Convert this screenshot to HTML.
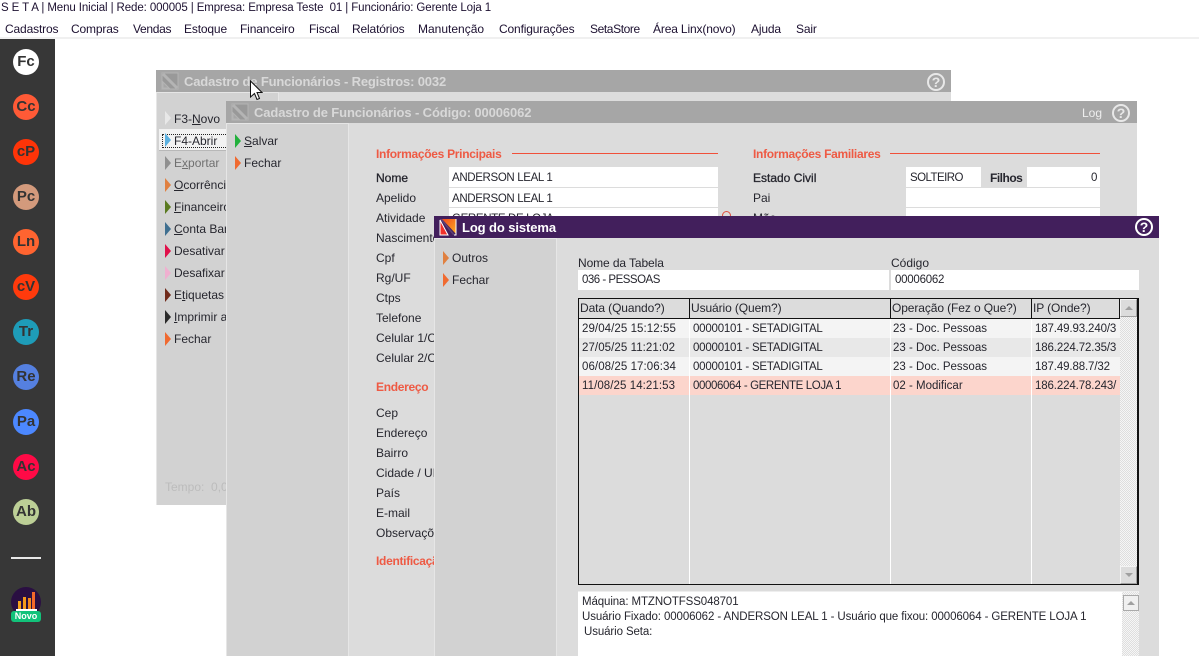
<!DOCTYPE html>
<html><head><meta charset="utf-8"><title>SETA</title>
<style>
html,body{margin:0;padding:0;width:1199px;height:656px;overflow:hidden;background:#fff}
body{position:relative;font-family:"Liberation Sans",sans-serif;font-size:12px;color:#26262e}
.a{position:absolute}
.t{position:absolute;white-space:nowrap;line-height:14px;font-size:12px}
.m{color:#1c1030;letter-spacing:-.15px;top:22px}
.win{position:absolute;overflow:hidden;background:#dcdcdc}
.bar{position:absolute;left:0;top:0;right:0;height:22px;background:#a6a6a6}
.ttl{position:absolute;white-space:nowrap;font-weight:bold;font-size:13px;line-height:23px;color:#d8d8d8;letter-spacing:-.14px}
.side{position:absolute;background:#d2d2d2;border-left:1px solid #e6e6e6;border-right:1px solid #e6e6e6;border-top:1px solid #e6e6e6}
.tri{position:absolute;width:0;height:0;border-style:solid;border-width:7px 0 7px 6px;border-color:transparent}
.c{position:absolute;left:13px;width:26px;height:26px;border-radius:50%;text-align:center;line-height:26px;font-weight:bold;font-size:15px;color:#333}
.f{position:absolute;background:#fff;height:19px;line-height:21px;padding-left:3px;white-space:nowrap;overflow:hidden;box-sizing:border-box;font-size:11.5px;letter-spacing:-.35px}
.h{position:absolute;white-space:nowrap;font-weight:bold;color:#ee5a44;line-height:14px;font-size:12px;letter-spacing:-.3px}
.ln{position:absolute;height:1px;background:#f0503a}
.help{position:absolute;width:14px;height:14px;border:2px solid #e8e8e8;border-radius:50%;color:#e8e8e8;font-weight:bold;font-size:14px;line-height:15px;text-align:center}
.sb7{-webkit-text-stroke:.3px currentColor;letter-spacing:0}
.hd{position:absolute;top:0;height:19px;line-height:19px;white-space:nowrap;overflow:hidden;border-right:1px solid #111;box-sizing:border-box;padding-left:1px;font-size:12px;letter-spacing:-.1px}
.row{position:absolute;left:0;width:541px;height:19px;line-height:21px}
.row span{position:absolute;white-space:nowrap;top:0;font-size:11.5px;letter-spacing:-.22px}
.row span.d{letter-spacing:.07px}.row span.o{letter-spacing:0}.row span.i{letter-spacing:-.13px}
.v{position:absolute;width:1px;background:#fff;top:20px;bottom:0}
.sb{position:absolute;background-color:#f6f6f6;background-image:conic-gradient(#dedede 25%,transparent 0 50%,#dedede 0 75%,transparent 0);background-size:2px 2px}
.btn{position:absolute;width:15px;height:16px;background:#dcdcdc;border:1px solid #aaa;border-color:#f4f4f4 #a0a0a0 #a0a0a0 #f4f4f4}
.up{position:absolute;left:4px;top:6px;width:0;height:0;border-left:4px solid transparent;border-right:4px solid transparent;border-bottom:4px solid #a0a0a0}
.dn{position:absolute;left:4px;top:6px;width:0;height:0;border-left:4px solid transparent;border-right:4px solid transparent;border-top:4px solid #a0a0a0}
.mm{font-size:11.5px;letter-spacing:-.11px}
</style></head>
<body>
<span class="t" style="left:1px;top:1px;color:#1c1030;font-size:11.5px;letter-spacing:-.1px">S E T A | Menu Inicial | Rede: 000005 | Empresa: Empresa Teste&nbsp; 01 | Funcionário: Gerente Loja 1</span>
<span class="t m" style="left:5px">Cadastros</span>
<span class="t m" style="left:71px">Compras</span>
<span class="t m" style="left:133px;letter-spacing:-.3px">Vendas</span>
<span class="t m" style="left:184px">Estoque</span>
<span class="t m" style="left:240px">Financeiro</span>
<span class="t m" style="left:309px">Fiscal</span>
<span class="t m" style="left:352px">Relatórios</span>
<span class="t m" style="left:418px;letter-spacing:0">Manutenção</span>
<span class="t m" style="left:499px">Configurações</span>
<span class="t m" style="left:590px;letter-spacing:-.4px">SetaStore</span>
<span class="t m" style="left:653px">Área Linx(novo)</span>
<span class="t m" style="left:751px">Ajuda</span>
<span class="t m" style="left:796px">Sair</span>
<div class="a" style="left:0;top:37px;width:1199px;height:2px;background:#f0f0f0"></div>

<div class="a" style="left:0;top:39px;width:55px;height:617px;background:#373737">
<div class="c" style="top:10px;background:#fff">Fc</div>
<div class="c" style="top:55px;background:#ff5a36">Cc</div>
<div class="c" style="top:100px;background:#ff3408">cP</div>
<div class="c" style="top:145px;background:#d39a7c">Pc</div>
<div class="c" style="top:190px;background:#ff6430">Ln</div>
<div class="c" style="top:235px;background:#ff3a0c">cV</div>
<div class="c" style="top:280px;background:#1e9cb8">Tr</div>
<div class="c" style="top:325px;background:#5580e0">Re</div>
<div class="c" style="top:370px;background:#4c88ff">Pa</div>
<div class="c" style="top:415px;background:#ff0a46">Ac</div>
<div class="c" style="top:460px;background:#bccf96">Ab</div>
<div class="a" style="left:11px;top:518px;width:30px;height:2px;background:#e8e8e8"></div>
<svg class="a" style="left:11px;top:548px" width="30" height="36" viewBox="0 0 30 36">
<circle cx="15" cy="15" r="15" fill="#2a0f42"/>
<rect x="7" y="14" width="3" height="8" fill="#f5a21c"/>
<rect x="12" y="10" width="3" height="12" fill="#f59a1c"/>
<rect x="17" y="11" width="3" height="11" fill="#f58a1c"/>
<rect x="21" y="5" width="3" height="17" fill="#f4682a"/>
<rect x="5" y="22" width="21" height="2" fill="#fff"/>
</svg>
<div class="a" style="left:11px;top:572px;width:30px;height:11px;border-radius:3px;background:#12c27a;color:#fff;font-weight:bold;font-size:9px;line-height:11px;text-align:center">Novo</div>
</div>

<!-- window 1 -->
<div class="win" style="left:156px;top:70px;width:795px;height:435px">
<div class="bar"></div>
<svg class="a" style="left:5px;top:2px" width="18" height="18" viewBox="0 0 18 18" fill="none"><rect x="1" y="1" width="16" height="16" fill="#999" stroke="#b4b4b4"/><path d="M2 2L16 16" stroke="#b4b4b4" stroke-width="3"/><path d="M2 10L8 16H2Z" fill="#a6a6a6" stroke="#b4b4b4"/></svg>
<div class="ttl" style="left:28px;top:0;letter-spacing:-.16px">Cadastro de Funcionários - Registros: 0032</div>
<div class="help" style="left:771px;top:3px">?</div>
<div class="side" style="left:0;top:22px;width:121px;height:413px"></div>
<div class="a" style="left:3px;top:59px;width:120px;height:21px;background:#f2f2f2;border-bottom:1px solid #b8b8b8"></div>
<div class="a" style="left:6px;top:64px;width:100px;height:12px;border:1px dotted #222"></div>
<div class="tri" style="left:9px;top:41px;border-left-color:#e8e8e8"></div>
<div class="tri" style="left:9px;top:63px;border-left-color:#5ab0e0"></div>
<div class="tri" style="left:9px;top:86px;border-left-color:#909090"></div>
<div class="tri" style="left:9px;top:108px;border-left-color:#e08040"></div>
<div class="tri" style="left:9px;top:130px;border-left-color:#5a7a20"></div>
<div class="tri" style="left:9px;top:152px;border-left-color:#3f6f90"></div>
<div class="tri" style="left:9px;top:174px;border-left-color:#e0104a"></div>
<div class="tri" style="left:9px;top:196px;border-left-color:#f0b0d0"></div>
<div class="tri" style="left:9px;top:218px;border-left-color:#702a1a"></div>
<div class="tri" style="left:9px;top:240px;border-left-color:#2a2a2a"></div>
<div class="tri" style="left:9px;top:262px;border-left-color:#f06a30"></div>
<span class="t" style="left:18px;top:42px">F3-<u>N</u>ovo</span>
<span class="t" style="left:18px;top:64px">F4-Abrir</span>
<span class="t" style="left:18px;top:86px;color:#707070">E<u>x</u>portar</span>
<span class="t" style="left:18px;top:108px"><u>O</u>corrências</span>
<span class="t" style="left:18px;top:130px"><u>F</u>inanceiro</span>
<span class="t" style="left:18px;top:152px"><u>C</u>onta Bancária</span>
<span class="t" style="left:18px;top:174px">Desativar</span>
<span class="t" style="left:18px;top:196px">Desafixar</span>
<span class="t" style="left:18px;top:218px">E<u>t</u>iquetas</span>
<span class="t" style="left:18px;top:240px"><u>I</u>mprimir a</span>
<span class="t" style="left:18px;top:262px">Fechar</span>
<span class="t" style="left:9px;top:410px;color:#bcbcbc">Tempo:&nbsp; 0,00</span>
</div>

<!-- window 2 -->
<div class="win" style="left:226px;top:101px;width:911px;height:555px">
<div class="bar"></div>
<svg class="a" style="left:5px;top:2px" width="18" height="18" viewBox="0 0 18 18" fill="none"><rect x="1" y="1" width="16" height="16" fill="#999" stroke="#b4b4b4"/><path d="M2 2L16 16" stroke="#b4b4b4" stroke-width="3"/><path d="M2 10L8 16H2Z" fill="#a6a6a6" stroke="#b4b4b4"/></svg>
<div class="ttl" style="left:28px;top:0;letter-spacing:-.12px">Cadastro de Funcionários - Código: 00006062</div>
<span class="t" style="left:856px;top:5px;color:#eee">Log</span>
<div class="help" style="left:886px;top:3px">?</div>
<div class="side" style="left:0;top:22px;width:121px;height:533px"></div>
<div class="tri" style="left:9px;top:33px;border-left-color:#22b03c"></div>
<div class="tri" style="left:9px;top:55px;border-left-color:#f06a30"></div>
<span class="t" style="left:18px;top:33px"><u>S</u>alvar</span>
<span class="t" style="left:18px;top:55px">Fechar</span>

<div class="h" style="left:150px;top:46px">Informações Principais</div>
<div class="ln" style="left:286px;top:52px;width:206px"></div>
<div class="h" style="left:527px;top:46px">Informações Familiares</div>
<div class="ln" style="left:664px;top:52px;width:210px"></div>

<span class="t sb7" style="left:150px;top:70px">Nome</span>
<span class="t" style="left:150px;top:90px">Apelido</span>
<span class="t" style="left:150px;top:110px">Atividade</span>
<span class="t" style="left:150px;top:130px">Nascimento</span>
<span class="t" style="left:150px;top:150px">Cpf</span>
<span class="t" style="left:150px;top:170px">Rg/UF</span>
<span class="t" style="left:150px;top:190px">Ctps</span>
<span class="t" style="left:150px;top:210px">Telefone</span>
<span class="t" style="left:150px;top:230px">Celular 1/Cpf</span>
<span class="t" style="left:150px;top:250px">Celular 2/Cpf</span>
<div class="h" style="left:150px;top:279px">Endereço</div>
<span class="t" style="left:150px;top:305px">Cep</span>
<span class="t" style="left:150px;top:325px">Endereço</span>
<span class="t" style="left:150px;top:345px">Bairro</span>
<span class="t" style="left:150px;top:365px">Cidade / UF</span>
<span class="t" style="left:150px;top:385px">País</span>
<span class="t" style="left:150px;top:405px">E-mail</span>
<span class="t" style="left:150px;top:425px">Observações</span>
<div class="h" style="left:150px;top:453px">Identificação</div>

<div class="f" style="left:223px;top:66px;width:269px;height:20px;line-height:23px">ANDERSON LEAL 1</div>
<div class="f" style="left:223px;top:87px;width:269px;line-height:22px">ANDERSON LEAL 1</div>
<div class="f" style="left:223px;top:107px;width:269px;line-height:22px">GERENTE DE LOJA</div>
<div class="a" style="left:496px;top:110px;width:7px;height:7px;border:1px solid #e05040;border-radius:50%"></div>

<span class="t sb7" style="left:527px;top:70px">Estado Civil</span>
<span class="t" style="left:527px;top:90px">Pai</span>
<span class="t" style="left:527px;top:110px">Mãe</span>
<div class="f" style="left:680px;top:66px;width:75px;height:20px;line-height:23px;letter-spacing:-.55px;padding-left:4px">SOLTEIRO</div>
<span class="t" style="left:764px;top:70px;font-weight:bold;letter-spacing:-.5px">Filhos</span>
<div class="f" style="left:801px;top:66px;width:73px;height:20px;line-height:23px;text-align:right;padding:0 3px 0 0">0</div>
<div class="f" style="left:680px;top:87px;width:194px"></div>
<div class="f" style="left:680px;top:107px;width:194px"></div>
</div>

<!-- window 3 -->
<div class="win" style="left:434px;top:216px;width:725px;height:440px">
<div class="bar" style="background:#421f5c"></div>
<svg class="a" style="left:5px;top:2px" width="18" height="18" viewBox="0 0 18 18">
<defs><linearGradient id="g" x1="0" y1="0" x2="1" y2="1"><stop offset="0" stop-color="#f4481e"/><stop offset="1" stop-color="#fcb020"/></linearGradient></defs>
<path d="M3 1H17V16Z" fill="url(#g)"/>
<path d="M17 1V17H15" fill="none" stroke="#fff" stroke-width="1"/>
<path d="M1 2L9 17H1Z" fill="#f0302a" stroke="#fff" stroke-width="1"/>
<path d="M1 1H3L16 17H14Z" fill="#fff" opacity=".15"/>
</svg>
<div class="ttl" style="left:28px;top:0;color:#fff;letter-spacing:-.1px">Log do sistema</div>
<div class="help" style="left:701px;top:2px;color:#fff;border-color:#fff">?</div>
<div class="side" style="left:0;top:22px;width:121px;height:418px"></div>
<div class="tri" style="left:9px;top:35px;border-left-color:#e08040"></div>
<div class="tri" style="left:9px;top:57px;border-left-color:#f06a30"></div>
<span class="t" style="left:18px;top:35px">Outros</span>
<span class="t" style="left:18px;top:57px">Fechar</span>

<span class="t" style="left:144px;top:40px;letter-spacing:-.1px">Nome da Tabela</span>
<span class="t" style="left:457px;top:40px">Código</span>
<div class="f" style="left:144px;top:54px;width:311px;height:20px;line-height:21px;padding-left:4px;letter-spacing:-.5px">036 - PESSOAS</div>
<div class="f" style="left:457px;top:54px;width:248px;height:20px;line-height:21px;padding-left:4px;letter-spacing:-.25px">00006062</div>

<div class="a" style="left:144px;top:82px;width:561px;height:287px;box-sizing:border-box;border:1px solid #111;border-right-width:2px;background:#dcdcdc;overflow:hidden">
 <div class="a" style="left:0;top:0;width:541px;height:20px;border-bottom:1px solid #111;box-sizing:border-box">
  <div class="hd" style="left:0;width:111px">Data (Quando?)</div>
  <div class="hd" style="left:111px;width:201px">Usuário (Quem?)</div>
  <div class="hd" style="left:312px;width:141px">Operação (Fez o Que?)</div>
  <div class="hd" style="left:453px;width:88px">IP (Onde?)</div>
 </div>
 <div class="row" style="top:20px;background:#f4f4f4"><span class="d" style="left:3px">29/04/25 15:12:55</span><span style="left:114px">00000101 - SETADIGITAL</span><span class="o" style="left:314px">23 - Doc. Pessoas</span><span class="i" style="left:456px">187.49.93.240/3</span></div>
 <div class="row" style="top:39px;background:#e8e8e8"><span class="d" style="left:3px">27/05/25 11:21:02</span><span style="left:114px">00000101 - SETADIGITAL</span><span class="o" style="left:314px">23 - Doc. Pessoas</span><span class="i" style="left:456px">186.224.72.35/3</span></div>
 <div class="row" style="top:58px;background:#f4f4f4"><span class="d" style="left:3px">06/08/25 17:06:34</span><span style="left:114px">00000101 - SETADIGITAL</span><span class="o" style="left:314px">23 - Doc. Pessoas</span><span class="i" style="left:456px">187.49.88.7/32</span></div>
 <div class="row" style="top:77px;background:#fcd5cc"><span class="d" style="left:3px">11/08/25 14:21:53</span><span style="left:114px;letter-spacing:-.39px">00006064 - GERENTE LOJA 1</span><span class="o" style="left:314px">02 - Modificar</span><span class="i" style="left:456px">186.224.78.243/</span></div>
 <div class="v" style="left:110px"></div><div class="v" style="left:311px"></div><div class="v" style="left:452px"></div>
 <div class="sb" style="left:541px;top:0;width:17px;height:285px"></div>
 <div class="btn" style="left:541px;top:0"><div class="up"></div></div>
 <div class="btn" style="left:541px;top:267px"><div class="dn"></div></div>
</div>

<div class="a" style="left:144px;top:375px;width:561px;height:65px;background:#fff;border-top:1px solid #eee;box-sizing:border-box">
 <span class="t mm" style="left:4px;top:3px">Máquina: MTZNOTFSS048701</span>
 <span class="t mm" style="left:4px;top:18px">Usuário Fixado: 00006062 - ANDERSON LEAL 1 - Usuário que fixou: 00006064 - GERENTE LOJA 1</span>
 <span class="t mm" style="left:6px;top:33px">Usuário Seta:</span>
 <div class="sb" style="left:544px;top:0;width:17px;height:65px"></div>
 <div class="btn" style="left:545px;top:3px;width:14px;height:14px;background:#f0f0f0;border-color:#aaa"><div class="up" style="left:3px;top:5px"></div></div>
</div>
</div>

<svg class="a" style="left:249px;top:80px;z-index:9" width="14" height="22" viewBox="0 0 14 22"><path d="M1.5 1V17L5.5 13.5L8 19.5L10.5 18.5L8 12.5H13Z" fill="#fff" stroke="#111" stroke-width="1"/></svg>
</body></html>
